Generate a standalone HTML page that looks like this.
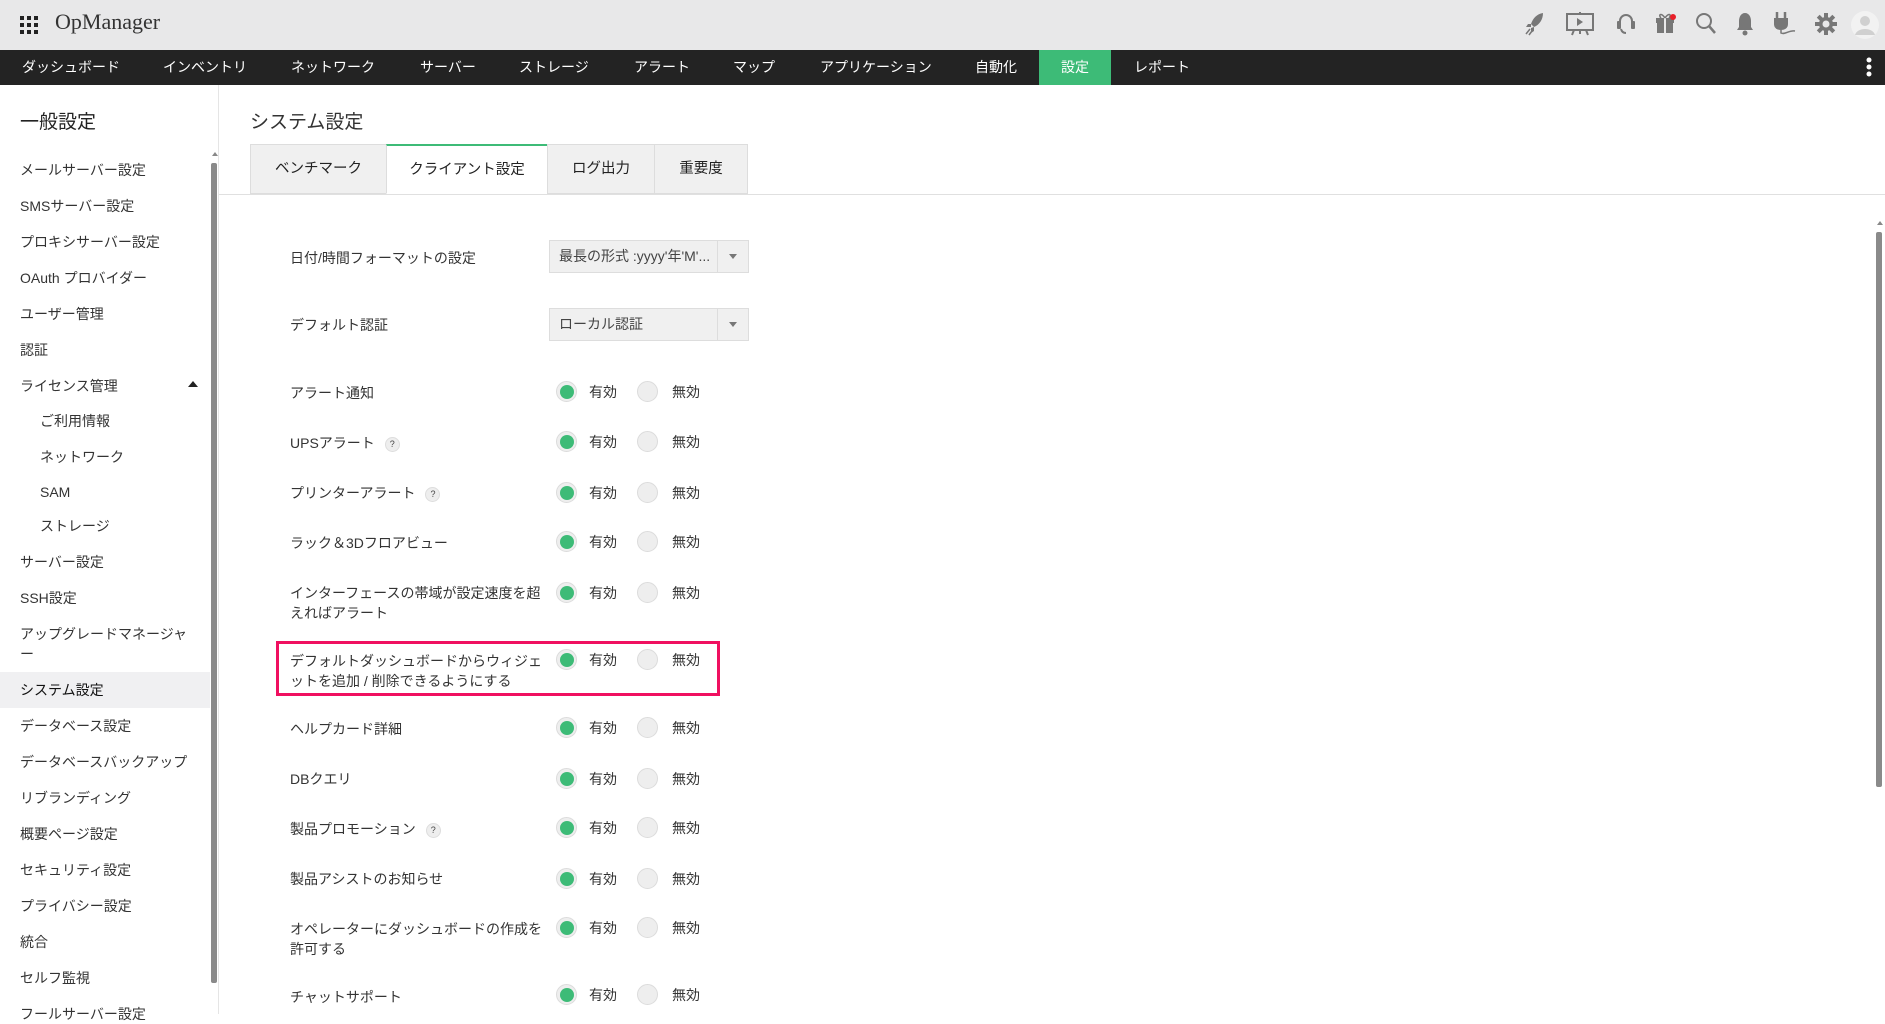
<!DOCTYPE html>
<html><head><meta charset="utf-8"><style>
*{margin:0;padding:0;box-sizing:border-box}
body{width:1885px;height:1014px;overflow:hidden;background:#fff;font-family:"Liberation Sans","Noto Sans CJK JP",sans-serif;color:#333;position:relative}
.a{position:absolute;white-space:nowrap}
#hdr{position:absolute;left:0;top:0;width:1885px;height:50px;background:#e8e8e9}
#nav{position:absolute;left:0;top:50px;width:1885px;height:35px;background:#232323}
#nav span{position:absolute;top:0;line-height:35px;color:#fff;font-size:14px}
.si{position:absolute;left:20px;font-size:14px;color:#333;line-height:20px}
.sub{left:40px}
.lb{position:absolute;left:290px;font-size:14px;color:#333;line-height:20px}
.r{position:absolute;width:21px;height:21px;border-radius:50%;background:#eeeeee;border:1px solid #dcdcdc}
.r.on::after{content:"";position:absolute;left:2.5px;top:2.5px;width:14px;height:14px;border-radius:50%;background:#3dbb77}
.rt{position:absolute;font-size:14px;color:#333;line-height:20px}
.q{display:inline-block;width:15px;height:15px;border-radius:50%;background:#eee;border:1px solid #ddd;font-size:9px;text-align:center;line-height:13px;margin-left:10px;vertical-align:1px;color:#444}
.dd{position:absolute;left:549px;width:200px;height:33px;background:#f0f0f0;border:1px solid #ddd;font-size:14px;line-height:31px;padding-left:9px;color:#444}
.dd::after{content:"";position:absolute;right:0;top:0;width:30px;height:31px;border-left:1px solid #ddd}
.dd i{position:absolute;right:11px;top:13px;border:4px solid transparent;border-top:5px solid #777}
.tab{position:absolute;top:144px;height:50px;background:#f0f0f0;border:1px solid #ddd;font-size:14.5px;line-height:48px;text-align:center;color:#222}
</style></head><body>
<div id="hdr">
<svg class="a" style="left:20px;top:16px" width="18" height="18"><g fill="#222"><rect x="0" y="0" width="4" height="4"/><rect x="7" y="0" width="4" height="4"/><rect x="14" y="0" width="4" height="4"/><rect x="0" y="7" width="4" height="4"/><rect x="7" y="7" width="4" height="4"/><rect x="14" y="7" width="4" height="4"/><rect x="0" y="14" width="4" height="4"/><rect x="7" y="14" width="4" height="4"/><rect x="14" y="14" width="4" height="4"/></g></svg>
<div class="a" style="left:55px;top:9px;font-size:22px;font-family:'Liberation Serif',serif;color:#333">OpManager</div>
<svg class="a" style="left:1525px;top:12px" width="20" height="24" viewBox="0 0 20 24"><path d="M18 1 C12 2 8 6 6 12 L9 15 C14 13 18 8 18 1Z M6 12 L3 12 L1 15 L6 15Z M9 15 L9 19 L6 21 L6 16Z" fill="#777"/><path d="M5 17 L1 22 M7 19 L4 23" stroke="#777" stroke-width="1.5"/></svg>
<svg class="a" style="left:1566px;top:12px" width="28" height="24" viewBox="0 0 28 24"><rect x="1" y="2" width="26" height="16" fill="none" stroke="#777" stroke-width="2"/><path d="M11 6 L17 10 L11 14Z" fill="#777"/><path d="M14 0 V2 M8 18 L6 23 M20 18 L22 23 M14 18 V22" stroke="#777" stroke-width="2"/></svg>
<svg class="a" style="left:1616px;top:12px" width="20" height="24" viewBox="0 0 20 24"><path d="M4 14 V9 A6 6 0 0 1 16 9 V14" fill="none" stroke="#777" stroke-width="2"/><rect x="1" y="9" width="4" height="8" rx="1" fill="#777"/><rect x="15" y="9" width="4" height="8" rx="1" fill="#777"/><path d="M5 17 Q6 21 10 21" fill="none" stroke="#777" stroke-width="2"/></svg>
<svg class="a" style="left:1655px;top:10px" width="22" height="24" viewBox="0 0 22 24"><rect x="1" y="8" width="18" height="5" fill="#777"/><rect x="2" y="13" width="16" height="10" fill="#777"/><path d="M10 8 V23" stroke="#e8e8e9" stroke-width="2"/><path d="M10 8 C6 2 3 5 6 8 M10 8 C14 2 17 5 14 8" fill="none" stroke="#777" stroke-width="1.5"/><circle cx="18" cy="7" r="3" fill="#e8202a"/></svg>
<svg class="a" style="left:1695px;top:12px" width="22" height="24" viewBox="0 0 22 24"><circle cx="9" cy="9" r="7" fill="none" stroke="#777" stroke-width="2"/><path d="M14 14 L20 21" stroke="#777" stroke-width="2.5"/></svg>
<svg class="a" style="left:1736px;top:12px" width="18" height="24" viewBox="0 0 18 24"><path d="M9 1 C5 1 3 5 3 9 V15 L1 18 H17 L15 15 V9 C15 5 13 1 9 1Z" fill="#777"/><circle cx="9" cy="21" r="2.5" fill="#777"/></svg>
<svg class="a" style="left:1773px;top:12px" width="26" height="24" viewBox="0 0 26 24"><path d="M4 0 V6 M12 0 V6" stroke="#777" stroke-width="2.5"/><path d="M1 6 H15 V12 C15 16 12 18 8 18 C4 18 1 16 1 12Z" fill="#777"/><path d="M8 18 V21 C12 23 16 18 22 19" fill="none" stroke="#777" stroke-width="1.5"/></svg>
<svg class="a" style="left:1815px;top:13px" width="22" height="22" viewBox="0 0 22 22"><g fill="#777"><circle cx="11" cy="11" r="7"/><rect x="9" y="0" width="4" height="22"/><rect x="0" y="9" width="22" height="4"/><rect x="9" y="0" width="4" height="22" transform="rotate(45 11 11)"/><rect x="9" y="0" width="4" height="22" transform="rotate(-45 11 11)"/></g><circle cx="11" cy="11" r="3.5" fill="#e8e8e9"/></svg>
<svg class="a" style="left:1851px;top:11px" width="28" height="28" viewBox="0 0 28 28"><circle cx="14" cy="14" r="14" fill="#f2f2f2"/><circle cx="14" cy="10" r="5" fill="#d0d0d0"/><path d="M4 24 C6 16 22 16 24 24 Z" fill="#d0d0d0"/></svg>
</div>
<div id="nav">
<span style="left:22px">ダッシュボード</span><span style="left:163px">インベントリ</span><span style="left:291px">ネットワーク</span><span style="left:420px">サーバー</span><span style="left:519px">ストレージ</span><span style="left:634px">アラート</span><span style="left:733px">マップ</span><span style="left:820px">アプリケーション</span><span style="left:975px">自動化</span>
<div class="a" style="left:1039px;top:0;width:72px;height:35px;background:#3dbb77"></div><span style="left:1061px">設定</span><span style="left:1134px">レポート</span>
<svg class="a" style="left:1866px;top:7px" width="6" height="22"><circle cx="3" cy="3" r="2.5" fill="#fff"/><circle cx="3" cy="10" r="2.5" fill="#fff"/><circle cx="3" cy="17" r="2.5" fill="#fff"/></svg>
</div>
<div class="a" style="left:218px;top:85px;width:1px;height:929px;background:#e5e5e5"></div>
<div class="a" style="left:20px;top:107px;font-size:19px;color:#222">一般設定</div>
<div class="a" style="left:0;top:672px;width:210px;height:36px;background:#f0f0f2"></div>
<div class="si" style="top:160px">メールサーバー設定</div>
<div class="si" style="top:196px">SMSサーバー設定</div>
<div class="si" style="top:232px">プロキシサーバー設定</div>
<div class="si" style="top:268px">OAuth プロバイダー</div>
<div class="si" style="top:304px">ユーザー管理</div>
<div class="si" style="top:340px">認証</div>
<div class="si" style="top:376px">ライセンス管理</div>
<div class="a" style="left:188px;top:381px;border:5px solid transparent;border-bottom:6px solid #222;border-top:0"></div>
<div class="si sub" style="top:411px">ご利用情報</div>
<div class="si sub" style="top:447px">ネットワーク</div>
<div class="si sub" style="top:482px">SAM</div>
<div class="si sub" style="top:516px">ストレージ</div>
<div class="si" style="top:552px">サーバー設定</div>
<div class="si" style="top:588px">SSH設定</div>
<div class="si" style="top:624px">アップグレードマネージャ</div>
<div class="si" style="top:644px">ー</div>
<div class="si" style="top:680px;color:#111">システム設定</div>
<div class="si" style="top:716px">データベース設定</div>
<div class="si" style="top:752px">データベースバックアップ</div>
<div class="si" style="top:788px">リブランディング</div>
<div class="si" style="top:824px">概要ページ設定</div>
<div class="si" style="top:860px">セキュリティ設定</div>
<div class="si" style="top:896px">プライバシー設定</div>
<div class="si" style="top:932px">統合</div>
<div class="si" style="top:968px">セルフ監視</div>
<div class="si" style="top:1004px">フールサーバー設定</div>
<div class="a" style="left:212px;top:152px;border:3px solid transparent;border-bottom:4px solid #888;border-top:0"></div>
<div class="a" style="left:211px;top:163px;width:6px;height:820px;background:#8a8a8a;border-radius:2px"></div>
<div class="a" style="left:250px;top:107px;font-size:19px;color:#333">システム設定</div>
<div class="a" style="left:219px;top:194px;width:1666px;height:1px;background:#e0e0e0"></div>
<div class="tab" style="left:250px;width:137px">ベンチマーク</div>
<div class="tab" style="left:386px;width:162px;background:#fff;border-bottom-color:#fff;border-top:2px solid #3dbb77">クライアント設定</div>
<div class="tab" style="left:547px;width:108px">ログ出力</div>
<div class="tab" style="left:654px;width:94px">重要度</div>
<div class="a" style="left:1877px;top:221px;border:3px solid transparent;border-bottom:4px solid #888;border-top:0"></div>
<div class="a" style="left:1876px;top:232px;width:6px;height:555px;background:#8a8a8a;border-radius:2px"></div>

<div class="lb" style="top:248px">日付/時間フォーマットの設定</div>
<div class="dd" style="top:240px">最長の形式 :yyyy'年'M'...<i></i></div>
<div class="lb" style="top:315px">デフォルト認証</div>
<div class="dd" style="top:308px">ローカル認証<i></i></div>

<div class="a" style="left:276px;top:641px;width:444px;height:55px;border:3px solid #f01060"></div>

<div class="lb" style="top:383px">アラート通知</div>
<div class="lb" style="top:433px">UPSアラート<span class="q">?</span></div>
<div class="lb" style="top:483px">プリンターアラート<span class="q">?</span></div>
<div class="lb" style="top:533px">ラック＆3Dフロアビュー</div>
<div class="lb" style="top:583px">インターフェースの帯域が設定速度を超<br>えればアラート</div>
<div class="lb" style="top:651px">デフォルトダッシュボードからウィジェ<br>ットを追加 / 削除できるようにする</div>
<div class="lb" style="top:719px">ヘルプカード詳細</div>
<div class="lb" style="top:769px">DBクエリ</div>
<div class="lb" style="top:819px">製品プロモーション<span class="q">?</span></div>
<div class="lb" style="top:869px">製品アシストのお知らせ</div>
<div class="lb" style="top:919px">オペレーターにダッシュボードの作成を<br>許可する</div>
<div class="lb" style="top:987px">チャットサポート</div>

<div id="radios"></div>
<script>
var ys=[392,442,493,542,593,660,728,779,828,879,928,995],h="";
ys.forEach(function(y){h+='<div class="r on" style="left:556px;top:'+(y-11)+'px"></div><div class="rt" style="left:589px;top:'+(y-10)+'px">有効</div><div class="r" style="left:637px;top:'+(y-11)+'px"></div><div class="rt" style="left:672px;top:'+(y-10)+'px">無効</div>';});
document.getElementById('radios').innerHTML=h;
</script>
</body></html>
